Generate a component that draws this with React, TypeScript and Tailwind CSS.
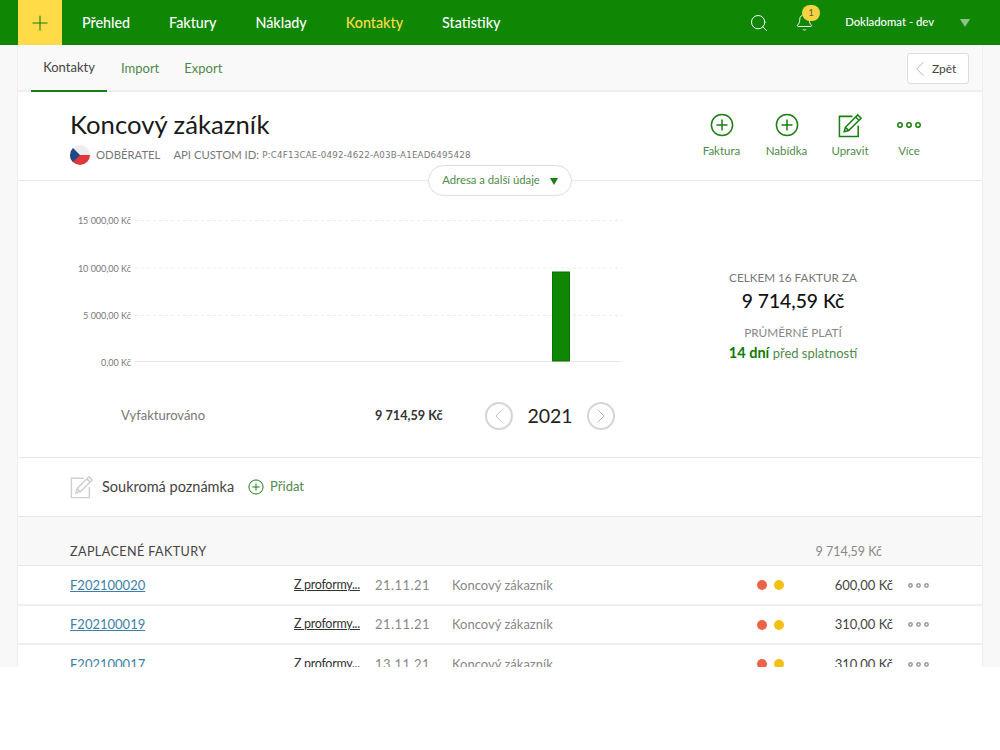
import { Bell, ChevronLeft, ChevronRight, Plus, Search } from "lucide-react"

const font = { fontFamily: "Lato, 'Noto Sans', sans-serif" }

const navItems = ["Přehled", "Faktury", "Náklady", "Kontakty", "Statistiky"]

const rows = [
  { no: "F202100020", date: "21.11.21", amount: "600,00 Kč" },
  { no: "F202100019", date: "21.11.21", amount: "310,00 Kč" },
  { no: "F202100017", date: "13.11.21", amount: "310,00 Kč" },
]

function CirclePlus({ size = 24 }: { size?: number }) {
  return (
    <svg width={size} height={size} viewBox="0 0 24 24" fill="none" stroke="#1a7f12" strokeWidth="1.5">
      <circle cx="12" cy="12" r="10.6" />
      <path d="M12 6.5v11M6.5 12h11" />
    </svg>
  )
}

function EditIcon({ color, size }: { color: string; size: number }) {
  return (
    <svg width={size} height={size} viewBox="0 0 26 26" fill="none" stroke={color} strokeWidth="1.6">
      <path d="M21 13v11.5H1.5V3.5H15" />
      <path d="M6.5 19.5l1.2-4.6L20.5 2l3.5 3.4-12.9 12.9z" />
      <path d="M18.3 4.2l3.5 3.4M7.7 14.9l3.4 3.4" />
    </svg>
  )
}

function Dots({ color, size }: { color: string; size: number }) {
  const w = size * 3 + 6
  return (
    <svg width={w} height={size} viewBox={`0 0 ${w} ${size}`} fill="none" stroke={color} strokeWidth="1.5">
      <circle cx={size / 2} cy={size / 2} r={size / 2 - 0.8} />
      <circle cx={w / 2} cy={size / 2} r={size / 2 - 0.8} />
      <circle cx={w - size / 2} cy={size / 2} r={size / 2 - 0.8} />
    </svg>
  )
}

function Action({ label, icon, width }: { label: string; icon: React.ReactNode; width: string }) {
  return (
    <div className={`flex flex-col items-center ${width}`}>
      <div className="h-[26px] flex items-center justify-center">{icon}</div>
      <span className="mt-[5px] text-[11.5px] leading-[16px] text-[#4f8a4a]">{label}</span>
    </div>
  )
}

function Chart() {
  const lines = [
    { y: 220.5, label: "15 000,00 Kč" },
    { y: 268, label: "10 000,00 Kč" },
    { y: 315.5, label: "5 000,00 Kč" },
  ]
  return (
    <svg width="640" height="190" viewBox="0 190 640 190" className="block">
      {lines.map((l) => (
        <g key={l.label}>
          <text x="131" y={l.y + 3.5} textAnchor="end" fontSize="9" fill="#777" fontFamily="Lato">
            {l.label}
          </text>
          <line x1="135" x2="622" y1={l.y} y2={l.y} stroke="#ececec" strokeDasharray="3 3" />
        </g>
      ))}
      <text x="131" y="365.5" textAnchor="end" fontSize="9" fill="#777" fontFamily="Lato">
        0,00 Kč
      </text>
      <line x1="135" x2="622" y1="361.5" y2="361.5" stroke="#eaeaea" />
      <rect x="552.5" y="272" width="17" height="89" fill="#0f8604" stroke="#0d7003" />
    </svg>
  )
}

export default function App() {
  return (
    <div className="h-[667px] overflow-hidden bg-[#f8f8f8] text-[#333]" style={font}>
      {/* Top bar */}
      <header className="h-[45px] bg-[#0f8604] flex items-center pl-[18px] pr-[30px] text-white">
        <div className="w-[44px] h-[45px] bg-[#fedb47] flex items-center justify-center">
          <Plus size={24} strokeWidth={1.1} color="#1a7f12" />
        </div>
        <nav className="flex ml-[20px] gap-[39px] text-[14.3px] font-medium">
          {navItems.map((item) => (
            <span key={item} className={item === "Kontakty" ? "text-[#fedb47]" : ""}>
              {item}
            </span>
          ))}
        </nav>
        <div className="ml-auto flex items-center">
          <Search size={20} strokeWidth={1.2} />
          <div className="relative ml-[26px] mr-[31px]">
            <Bell size={19} strokeWidth={1.2} />
            <span className="absolute -top-[8px] left-[7px] w-[18px] h-[16px] rounded-full bg-[#fbd23f] text-[#555] text-[9px] flex items-center justify-center">
              1
            </span>
          </div>
          <span className="text-[11.3px] font-medium">Dokladomat - dev</span>
          <span className="ml-[26px] w-0 h-0 border-x-[5px] border-x-transparent border-t-[8px] border-t-[#8fc18a]" />
        </div>
      </header>

      <main className="mx-[17px] border-x border-[#eeeeee]">
        {/* Sub navigation */}
        <div className="h-[47px] bg-[#f9f9f9] border-b-2 border-[#eeeeee] flex pl-[13px] pr-[13px] text-[13px]">
          <div className="w-[76px] h-[47px] border-b-2 border-[#1a7f12] flex items-center justify-center text-[#444] pt-[1px]">
            Kontakty
          </div>
          <div className="flex items-center h-[46px] pt-[1px] ml-[14px] gap-[25px] text-[#4f8a4a]">
            <span>Import</span>
            <span>Export</span>
          </div>
          <div className="ml-auto mt-[8px] w-[62px] h-[31px] bg-white border border-[#ddd] rounded-[3px] flex items-center text-[12px] text-[#444]">
            <ChevronLeft size={26} strokeWidth={0.8} color="#aaa" className="-ml-[1px]" />
            <span className="-ml-[1px]">Zpět</span>
          </div>
        </div>

        {/* Contact head */}
        <section className="relative h-[89px] bg-white border-b border-[#e8e8e8] flex pl-[52px]">
          <div className="pt-[14px]">
            <h1 className="text-[25.7px] leading-[36px] text-[#1a1a1a]">Koncový zákazník</h1>
            <div className="flex items-center mt-[3px] text-[11.3px] text-[#777]">
              <svg width="20" height="20" viewBox="0 0 20 20">
                <defs>
                  <clipPath id="flag">
                    <circle cx="10" cy="10" r="10" />
                  </clipPath>
                </defs>
                <g clipPath="url(#flag)">
                  <rect width="20" height="10" fill="#eeeeee" />
                  <rect y="10" width="20" height="10" fill="#e0363c" />
                  <path d="M0 0l10 10L0 20z" fill="#1d4a86" />
                </g>
              </svg>
              <span className="ml-[6px]">ODBĚRATEL</span>
              <span className="ml-[13px]">API CUSTOM ID:</span>
              <span className="ml-[3px] mt-[1px] text-[8.7px] tracking-[0.2px]" style={{ fontFamily: "'DejaVu Sans', sans-serif" }}>
                P:C4F13CAE-0492-4622-A03B-A1EAD6495428
              </span>
            </div>
          </div>
          <div className="ml-auto mr-[45px] mt-[20px] flex items-start">
            <Action label="Faktura" width="w-[65px]" icon={<CirclePlus />} />
            <Action label="Nabídka" width="w-[65px]" icon={<CirclePlus />} />
            <Action label="Upravit" width="w-[62px]" icon={<EditIcon color="#1a7f12" size={25} />} />
            <Action label="Více" width="w-[56px]" icon={<Dots color="#1a7f12" size={6} />} />
          </div>
          <div className="absolute left-[410px] top-[73px] w-[144px] h-[31px] rounded-full bg-white border border-[#ddd] flex items-center justify-center text-[11.3px] text-[#4f8a4a] z-10">
            Adresa a další údaje
            <span className="ml-[10px] mt-[2px] w-0 h-0 border-x-[4.5px] border-x-transparent border-t-[7px] border-t-[#1a7f12]" />
          </div>
        </section>

        {/* Chart + totals */}
        <section className="h-[277px] bg-white border-b border-[#e8e8e8] flex">
          <div className="w-[640px] -ml-[18px] pt-[9px] shrink-0">
            <Chart />
            <div className="flex items-center mt-[21px] h-[30px] pl-[121px]">
              <span className="text-[13px] text-[#777] w-[254px]">Vyfakturováno</span>
              <span className="text-[12.7px] font-bold text-[#333] w-[110px]">9 714,59 Kč</span>
              <span className="w-[28px] h-[28px] rounded-full border-2 border-[#d5d5d5] flex items-center justify-center">
                <ChevronLeft size={26} strokeWidth={0.8} color="#aaa" />
              </span>
              <span className="w-[74px] text-center text-[19.5px] text-[#222]">2021</span>
              <span className="w-[28px] h-[28px] rounded-full border-2 border-[#d5d5d5] flex items-center justify-center">
                <ChevronRight size={26} strokeWidth={0.8} color="#aaa" />
              </span>
            </div>
          </div>
          <div className="flex-1 flex flex-col items-center pt-[88px] pr-[36px]">
            <span className="text-[11.7px] leading-[16px] text-[#777]">CELKEM 16 FAKTUR ZA</span>
            <span className="text-[19.3px] leading-[26px] mt-[3px] font-medium text-[#111]">9 714,59 Kč</span>
            <span className="text-[11.8px] leading-[16px] mt-[11px] text-[#888]">PRŮMĚRNĚ PLATÍ</span>
            <span className="text-[13px] leading-[20px] mt-[2px] text-[#4f8a4a]">
              <b className="text-[14.5px] text-[#0f7a05]">14 dní</b> před splatností
            </span>
          </div>
        </section>

        {/* Private note */}
        <section className="h-[59px] bg-white border-b border-[#e8e8e8] flex items-center pl-[52px]">
          <EditIcon color="#cfcfcf" size={24} />
          <span className="ml-[8px] text-[14.5px] text-[#444]">Soukromá poznámka</span>
          <span className="ml-[14px] flex">
            <CirclePlus size={16} />
          </span>
          <span className="ml-[6px] text-[13px] text-[#4f8a4a]">Přidat</span>
        </section>

        {/* Paid invoices */}
        <section className="h-[49px] bg-[#f8f8f8] border-b border-[#e8e8e8] flex items-end pb-[3px] pl-[52px]">
          <span className="text-[12.6px] tracking-[0.4px] text-[#444]">ZAPLACENÉ FAKTURY</span>
          <span className="ml-auto mr-[100px] text-[12.5px] text-[#888]">9 714,59 Kč</span>
        </section>
        {rows.map((r) => (
          <div key={r.no} className="h-[39.5px] pt-[1px] bg-white border-b-2 border-[#f0f0f0] flex items-center pl-[52px] text-[13px]">
            <a className="w-[224px] underline text-[#3d7fa6]">{r.no}</a>
            <a className="w-[81px] underline text-[12.5px] tracking-[-0.3px] text-[#333]">Z proformy...</a>
            <span className="w-[77px] tracking-[0.45px] text-[#888]">{r.date}</span>
            <span className="w-[305px] text-[#888]">Koncový zákazník</span>
            <span className="w-[10px] h-[10px] rounded-full bg-[#ee6449]" />
            <span className="ml-[7px] w-[10px] h-[10px] rounded-full bg-[#f4bf16]" />
            <span className="w-[109px] text-right text-[#444]">{r.amount}</span>
            <span className="ml-[15px] flex">
              <Dots color="#999" size={5} />
            </span>
          </div>
        ))}
      </main>
    </div>
  )
}
